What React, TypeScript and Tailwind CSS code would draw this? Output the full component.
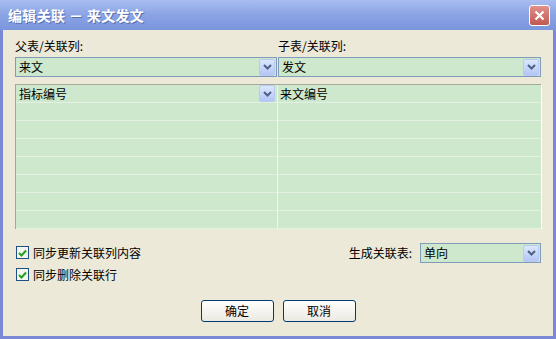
import React from "react";

const font = { fontFamily: '"Noto Sans CJK SC", "Liberation Sans", sans-serif' };

function Chevron() {
  return (
    <svg width="9" height="6" viewBox="0 0 9 6">
      <path d="M1 1 L4.5 4.5 L8 1" stroke="#4d6185" strokeWidth="2" fill="none" />
    </svg>
  );
}

function DropButton() {
  return (
    <div className="flex h-[17px] w-[16px] items-center justify-center rounded-[2px] border border-[#b9c9ef] bg-gradient-to-b from-[#dce6fd] to-[#b3c6f5]">
      <Chevron />
    </div>
  );
}

function Combo({ value, className = "" }: { value: string; className?: string }) {
  return (
    <div
      className={`flex h-[20px] items-center justify-between border border-[#7f9db9] bg-[#cde8cc] pl-[3px] pr-[1px] text-[12px] leading-none text-black ${className}`}
    >
      <span>{value}</span>
      <DropButton />
    </div>
  );
}

function Check({ label }: { label: string }) {
  return (
    <div className="flex items-center gap-[4px] text-[12px] leading-none">
      <div className="flex h-[13px] w-[13px] items-center justify-center border border-[#1c5180] bg-[#f4f4ee]">
        <svg width="9" height="8" viewBox="0 0 9 8">
          <path d="M1 4 L3.5 6.5 L8 1.5" stroke="#21a121" strokeWidth="2" fill="none" />
        </svg>
      </div>
      <span>{label}</span>
    </div>
  );
}

function Button({ label }: { label: string }) {
  return (
    <div className="flex h-[22px] w-[73px] items-center justify-center rounded-[3px] border border-[#003c74] bg-gradient-to-b from-[#ffffff] to-[#ece9e0] text-[12px] leading-none">
      {label}
    </div>
  );
}

export default function App() {
  const rows = [0, 1, 2, 3, 4, 5, 6, 7];
  return (
    <div className="flex h-[339px] w-[556px] flex-col overflow-hidden bg-[#7a88d6]" style={font}>
      <div className="flex h-[30px] items-center justify-between bg-gradient-to-b from-[#a9bdf0] via-[#8aa3e4] to-[#7a96dc] pl-[8px] pr-[6px]">
        <span className="text-[14px] font-bold tracking-wide text-white [text-shadow:1px_1px_0_#5a6fb0]">
          编辑关联 － 来文发文
        </span>
        <div className="flex h-[21px] w-[21px] items-center justify-center rounded-[3px] border border-white bg-gradient-to-b from-[#e0908a] to-[#c1584f]">
          <svg width="11" height="11" viewBox="0 0 11 11">
            <path d="M1.5 1.5 L9.5 9.5 M9.5 1.5 L1.5 9.5" stroke="white" strokeWidth="2.2" />
          </svg>
        </div>
      </div>
      <div className="mx-[3px] mb-[3px] flex flex-1 flex-col bg-[#ece9d8] px-[12px] pt-[10px] text-[#000]">
        <div className="grid grid-cols-[263px_263px] text-[12px] leading-none">
          <div className="flex flex-col">
            <span className="h-[15px]">父表/关联列:</span>
            <Combo value="来文" className="mt-[2px] mr-[1px]" />
          </div>
          <div className="flex flex-col">
            <span className="h-[15px]">子表/关联列:</span>
            <Combo value="发文" className="mt-[2px]" />
          </div>
        </div>
        <div className="mt-[7px] grid h-[145px] grid-cols-[262px_264px] border-l border-t border-[#a7a69b] bg-[#cde8cc] text-[12px] leading-none">
          <div className="flex flex-col border-r border-[#eef6ee]">
            {rows.map((r) => (
              <div key={r} className="flex h-[18px] items-center justify-between border-b border-[#e3f1e2] pl-[3px] pr-[2px]">
                {r === 0 ? (
                  <>
                    <span>指标编号</span>
                    <DropButton />
                  </>
                ) : null}
              </div>
            ))}
          </div>
          <div className="flex flex-col border-r border-white">
            {rows.map((r) => (
              <div key={r} className="flex h-[18px] items-center border-b border-[#e3f1e2] pl-[2px]">
                {r === 0 ? <span>来文编号</span> : null}
              </div>
            ))}
          </div>
        </div>
        <div className="mt-[14px] flex items-start justify-between">
          <div className="flex flex-col gap-[9px] pl-[1px] pt-[3px]">
            <Check label="同步更新关联列内容" />
            <Check label="同步删除关联行" />
          </div>
          <div className="flex items-center gap-[8px] text-[12px] leading-none">
            <span>生成关联表:</span>
            <Combo value="单向" className="w-[121px]" />
          </div>
        </div>
        <div className="mt-[19px] flex justify-center gap-[9px]">
          <Button label="确定" />
          <Button label="取消" />
        </div>
      </div>
    </div>
  );
}
